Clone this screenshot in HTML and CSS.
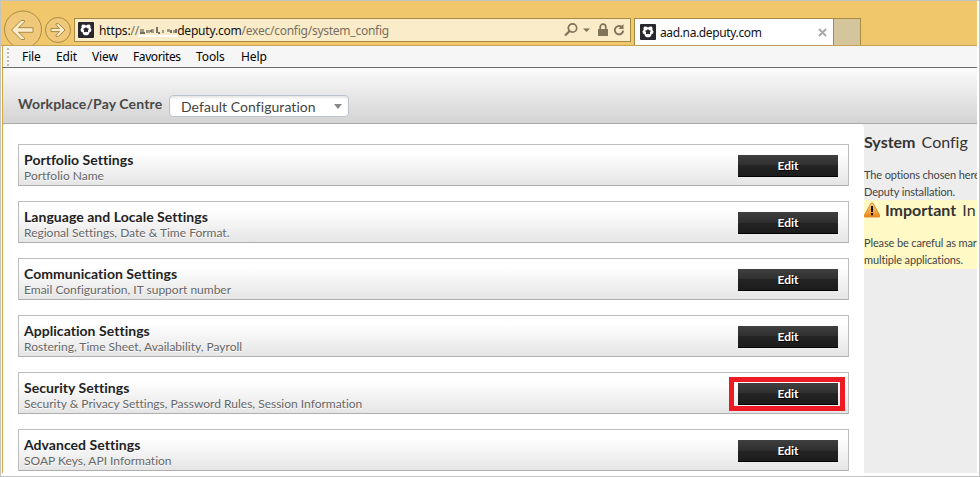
FILE: index.html
```html
<!DOCTYPE html>
<html lang="en">
<head>
<meta charset="utf-8">
<title>System Config</title>
<link rel="stylesheet" href="styles.css">
</head>
<body>
<svg class="defs" width="0" height="0" aria-hidden="true">
  <symbol id="fav" viewBox="0 0 16 16">
    <rect width="16" height="16" rx="1" fill="#27272d"/>
    <path d="M4.500 2.500 7 2.800 8 3.800 9 2.800 11.500 2.500 12.600 4 12.400 5.800 13.500 7.500 13 9.500 11.500 10.200 11 12 9.500 13.300H6.500L5 12 4.500 10.200 3 9.500 2.500 7.500 3.600 5.800 3.400 4z" fill="#fff"/>
    <path d="M8 5 9.100 6.300 11 6.700 9.900 8.300 10.100 10.200 8 9.700 5.900 10.200 6.100 8.300 5 6.700 6.900 6.300z" fill="#27272d"/>
  </symbol>
</svg>
<div class="window">
  <header class="chrome">
    <svg class="nav" width="72" height="44" viewBox="0 0 72 44">
      <g fill="#efc87a" stroke="#a98a45"><circle cx="21" cy="28.500" r="18.500"/><circle cx="56" cy="29" r="12.500"/></g>
      <g fill="#faebc9" stroke="#a98a45" stroke-linejoin="round">
        <path d="M9.500 29 19 19.500h3.500v1.500l-6 5.700H31v4.600H16.500l6 5.700v1.500H19z"/>
        <path d="M63 29 56.700 22.700H54v1.200l3.600 3.500H49v3.200h8.600L54 34.100v1.200h2.700z"/>
      </g>
    </svg>
    <div class="address">
      <svg class="fav" width="16" height="16"><use href="#fav"/></svg>
      <div class="url"><span class="scheme">https:</span><span class="slashes">//</span><svg class="masked" width="40" height="12" viewBox="0 0 40 12"><path d="M0 8h40v2H0z" fill="#fff"/><path d="M2 2h4v3H2zM8 3h4v3H8zM13 2h3v4h-3zM24 3h2v3h-2zM29 2h3v3h-3zM35 3h3v3h-3z" fill="#a49b86"/><path d="M2 5h5v2H2zM12 3h2v2h-2zM18 0h2v6h-2zM20 5h2v2h-2zM32 3h2v3h-2zM37 2h2v4h-2z" fill="#777163"/></svg><span class="host">deputy.com</span><span class="path">/exec/config/system_config</span></div>
      <svg class="tools" width="62" height="16" viewBox="0 0 62 16" fill="none" stroke="#7f7359" stroke-width="1.700">
        <circle cx="8.500" cy="6" r="4.200"/><path d="M5.700 9 1 13.500" stroke-width="2.200"/>
        <path d="M19 6.500h7L22.500 10z" fill="#7f7359" stroke="none"/>
        <path d="M34 7h10v7H34z" fill="#7f7359" stroke="none"/><path d="M36.200 7V5a2.800 2.800 0 0 1 5.600 0v2"/>
        <path d="M57.500 4.800A4.200 4.200 0 1 0 59.200 8.500" stroke-width="1.900"/><path d="M59.500 2v5h-5z" fill="#7f7359" stroke="none"/>
      </svg>
    </div>
    <div class="tab">
      <svg class="fav" width="16" height="16"><use href="#fav"/></svg>
      <span class="tab-title">aad.na.deputy.com</span>
      <svg class="close" width="9" height="9" viewBox="0 0 9 9"><path d="M1 1l7 7M8 1 1 8" stroke="#aaa" stroke-width="2"/></svg>
    </div>
    <div class="new-tab"></div>
  </header>
  <nav class="menu"><i class="grip"></i><span class="m-file">File</span><span class="m-edit">Edit</span><span class="m-view">View</span><span class="m-fav">Favorites</span><span class="m-tools">Tools</span><span class="m-help">Help</span></nav>
  <section class="toolbar">
    <label>Workplace/Pay Centre</label>
    <div class="select"><span>Default Configuration</span><i class="caret"></i></div>
  </section>
  <div class="page">
    <main class="list">
      <article class="row"><div><h2>Portfolio Settings</h2><p>Portfolio Name</p></div><button>Edit</button></article>
      <article class="row"><div><h2>Language and Locale Settings</h2><p>Regional Settings, Date &amp; Time Format.</p></div><button>Edit</button></article>
      <article class="row"><div><h2>Communication Settings</h2><p>Email Configuration, IT support number</p></div><button>Edit</button></article>
      <article class="row"><div><h2>Application Settings</h2><p>Rostering, Time Sheet, Availability, Payroll</p></div><button>Edit</button></article>
      <article class="row"><div><h2>Security Settings</h2><p>Security &amp; Privacy Settings, Password Rules, Session Information</p></div><button class="marked">Edit</button></article>
      <article class="row"><div><h2>Advanced Settings</h2><p>SOAP Keys, API Information</p></div><button>Edit</button></article>
    </main>
    <aside class="side">
      <h1><b>System</b> Config</h1>
      <p>The options chosen here<br>Deputy installation.</p>
      <div class="notice">
        <h3><svg width="16" height="16" viewBox="0 0 16 16"><defs><linearGradient id="w" x2="0" y2="1"><stop stop-color="#fbd982"/><stop offset="1" stop-color="#ee8612"/></linearGradient></defs><path d="M7.200 1h1.600L15.500 13v2H.5v-2z" fill="url(#w)" stroke="#dd8a32" stroke-linejoin="round"/><path d="M8 4v6M8 11v2.200" stroke="#111" stroke-width="2"/></svg><b>Important</b> In</h3>
        <p>Please be careful as mar<br>multiple applications.</p>
      </div>
    </aside>
  </div>
</div>
</body>
</html>
```
FILE: styles.css
```css
*, *::after { box-sizing: border-box; }
body { margin: 0; background: #fff; font-family: Lato, sans-serif; color: #333; font-variant-ligatures: none; }
h1, h2, h3, p { margin: 0; }
svg { display: block; flex: none; }
.defs { position: absolute; }
.window { width: 980px; height: 477px; border: 1px solid #c3c3c3; padding: 0 2px 3px 1px; overflow: hidden; }
.chrome { height: 45px; background: #f0c76a; border-bottom: 1px solid #c5a254; display: flex; align-items: flex-start; font: 12px "Noto Sans", sans-serif; color: #111; margin-left: -1px; padding-left: 1px; }
.nav { width: 72px; }
.address { width: 557px; height: 24px; margin-top: 17px; border: 1px solid #a98a45; background: #faebc9; display: flex; align-items: center; padding: 0 3px; }
.url { display: flex; align-items: center; margin-left: 5px; flex: 1; white-space: nowrap; }
.scheme, .slashes { letter-spacing: -0.15px; }
.host { letter-spacing: -0.2px; }
.path { letter-spacing: -0.25px; }
.slashes, .path { color: #77705f; }
.masked { margin: 6px -1px 0 -1px; }
.tools { margin-right: 1px; }
.tab { width: 200px; height: 27px; margin: 17px 0 0 3px; border: 1px solid #a98a45; border-bottom: 0; background: #fff; display: flex; align-items: center; padding: 0 6px 0 5px; }
.tab-title { margin-left: 4px; flex: 1; letter-spacing: -0.37px; }
.new-tab { width: 27px; height: 27px; margin-top: 17px; border: 1px solid #a98a45; border-width: 1px 1px 0 0; background: #d5c59d; }
.menu { height: 22px; background: #f6f6f6; border-left: 1px solid #d5a63e; border-bottom: 1px solid #6c6c6c; display: flex; align-items: center; font: 12px/20px "Noto Sans", sans-serif; color: #000; }
.grip { width: 2px; height: 18px; margin-left: 4px; background: repeating-linear-gradient(#bbb 0 2px, transparent 2px 4px); }
.menu span { white-space: nowrap; letter-spacing: -0.1px; }
.menu .m-file { margin-left: 13px; width: 34px; }
.menu .m-edit { width: 36px; }
.menu .m-view { width: 41px; }
.menu .m-fav { width: 63px; letter-spacing: -0.4px; }
.menu .m-tools { width: 45px; }
.toolbar { height: 56px; border-left: 1px solid #d5a63e; border-bottom: 1px solid #aaa; background: linear-gradient(#fbfbfb, #d3d3d3); display: flex; align-items: flex-start; padding: 27px 0 0 15px; }
.toolbar label { width: 151px; margin-top: -1px; font-size: 14px; letter-spacing: 0.13px; font-weight: 700; line-height: 19px; color: #484848; white-space: nowrap; }
.select { width: 180px; height: 22px; border: 1px solid #bcc3d0; border-radius: 4px; background: #fff; display: flex; align-items: center; justify-content: space-between; padding: 1px 6px 0 11px; font-size: 14px; letter-spacing: 0.05px; color: #444; box-shadow: inset 0 2px 2px #e8e8e8; }
.caret { border: 4px solid transparent; border-top: 5px solid #888; border-bottom: 0; margin-bottom: 1px; }
.page { height: 349px; display: flex; border-left: 1px solid #d5a63e; background: #ededed; }
.list { width: 861px; flex: none; background: #fff; border-radius: 4px 4px 0 0; padding: 20px 15px 0; display: flex; flex-direction: column; gap: 15px; }
.row { height: 42px; flex: none; border: 1px solid #bdbdbd; border-bottom-color: #afafaf; background: linear-gradient(#fff 20%, #e5e5e5); display: flex; justify-content: space-between; padding: 6px 10px 0 5px; }
.row h2 { font-size: 14px; letter-spacing: 0.04px; line-height: 18px; color: #222; text-shadow: 0 1px #fff; }
.row p { font-size: 12px; line-height: 14px; color: #666; text-shadow: 0 1px #fff; }
.row button { position: relative; width: 100px; height: 22px; margin-top: 4px; padding: 0; border: 0; border-bottom: 1px solid #000; background: linear-gradient(#404040, #2e2e2e 50%, #242424 50%, #1c1c1c); font: 700 12px Lato, sans-serif; color: #fff; text-shadow: 1px 1px #000; }
.marked::after { content: ""; position: absolute; top: -6px; left: -9px; width: 116px; height: 34px; border: 5px solid #ed1c24; }
.side { width: 113px; overflow: hidden; white-space: nowrap; }
.side h1, .side h3 { font-size: 16px; font-weight: 400; line-height: 20px; }
.side h1 { margin-top: 8px; word-spacing: 2px; }
.side p { font-size: 11px; letter-spacing: -0.13px; line-height: 17px; margin-top: 14px; color: #444; }
.notice { background: #fff9c6; height: 69px; overflow: hidden; }
.notice h3 { display: flex; align-items: center; white-space: pre; height: 20px; word-spacing: 2px; }
.notice h3 b { margin-left: 5px; }
```
